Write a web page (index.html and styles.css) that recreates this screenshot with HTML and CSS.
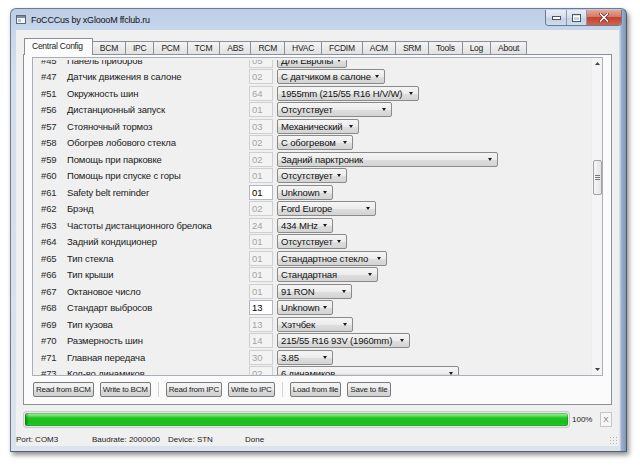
FILE: index.html
```html
<!DOCTYPE html>
<html>
<head>
<meta charset="utf-8">
<link rel="stylesheet" href="styles.css">
</head>
<body>
<div class="window">
  <div class="titlebar">
    <svg class="appicon" width="10" height="9" viewBox="0 0 10 9"><rect x="0.5" y="0.5" width="9" height="8" fill="#f4f6f9" stroke="#5d6675"/><rect x="1" y="1" width="8" height="2" fill="#7d8aa0"/><rect x="2" y="4" width="3" height="3" fill="#b9c3d2"/></svg>
    <span class="title">FoCCCus by xGloooM ffclub.ru</span>
    <div class="winbtns">
      <span class="wb wb-min"><svg width="9" height="4" viewBox="0 0 9 4"><rect x="0.5" y="0.5" width="8" height="3" fill="#fff" stroke="#4a5566"/></svg></span>
      <span class="wb wb-max"><svg width="9" height="8" viewBox="0 0 9 8"><rect x="0.5" y="0.5" width="8" height="7" fill="none" stroke="#4a5566"/><rect x="1.5" y="2.5" width="6" height="4" fill="none" stroke="#fff"/></svg></span>
      <span class="wb wb-close"><svg width="10" height="9" viewBox="0 0 10 9"><path d="M1.5 1 L8.5 8 M8.5 1 L1.5 8" stroke="#6a2020" stroke-width="3" stroke-linecap="square"/><path d="M1.5 1 L8.5 8 M8.5 1 L1.5 8" stroke="#fff" stroke-width="1.6" stroke-linecap="square"/></svg></span>
    </div>
  </div>
  <div class="client">
    <div class="tabs">
      <div class="tab active">Central Config</div>
      <div class="tab">BCM</div>
      <div class="tab">IPC</div>
      <div class="tab">PCM</div>
      <div class="tab">TCM</div>
      <div class="tab">ABS</div>
      <div class="tab">RCM</div>
      <div class="tab">HVAC</div>
      <div class="tab">FCDIM</div>
      <div class="tab">ACM</div>
      <div class="tab">SRM</div>
      <div class="tab">Tools</div>
      <div class="tab">Log</div>
      <div class="tab">About</div>
    </div>
    <div class="pane">
      <div class="scrollarea">
        <div class="viewport">
          <div class="list">
            <div class="row"><span class="num">#45</span><span class="name">Панель приборов</span><span class="val">05</span><span class="combo" style="width:70px"><span class="ctext">Для Европы</span><i class="arrow"></i></span></div>
            <div class="row"><span class="num">#47</span><span class="name">Датчик движения в салоне</span><span class="val">02</span><span class="combo" style="width:108px"><span class="ctext">С датчиком в салоне</span><i class="arrow"></i></span></div>
            <div class="row"><span class="num">#51</span><span class="name">Окружность шин</span><span class="val">64</span><span class="combo" style="width:142px"><span class="ctext">1955mm (215/55 R16 H/V/W)</span><i class="arrow"></i></span></div>
            <div class="row"><span class="num">#56</span><span class="name">Дистанционный запуск</span><span class="val">01</span><span class="combo" style="width:115px"><span class="ctext">Отсутствует</span><i class="arrow"></i></span></div>
            <div class="row"><span class="num">#57</span><span class="name">Стояночный тормоз</span><span class="val">03</span><span class="combo" style="width:82px"><span class="ctext">Механический</span><i class="arrow"></i></span></div>
            <div class="row"><span class="num">#58</span><span class="name">Обогрев лобового стекла</span><span class="val">02</span><span class="combo" style="width:76px"><span class="ctext">С обогревом</span><i class="arrow"></i></span></div>
            <div class="row"><span class="num">#59</span><span class="name">Помощь при парковке</span><span class="val">02</span><span class="combo" style="width:221px"><span class="ctext">Задний парктроник</span><i class="arrow"></i></span></div>
            <div class="row"><span class="num">#60</span><span class="name">Помощь при спуске с горы</span><span class="val">01</span><span class="combo" style="width:70px"><span class="ctext">Отсутствует</span><i class="arrow"></i></span></div>
            <div class="row"><span class="num">#61</span><span class="name">Safety belt reminder</span><span class="val edit">01</span><span class="combo" style="width:56px"><span class="ctext">Unknown</span><i class="arrow"></i></span></div>
            <div class="row"><span class="num">#62</span><span class="name">Брэнд</span><span class="val">02</span><span class="combo" style="width:99px"><span class="ctext">Ford Europe</span><i class="arrow"></i></span></div>
            <div class="row"><span class="num">#63</span><span class="name">Частоты дистанционного брелока</span><span class="val">24</span><span class="combo" style="width:56px"><span class="ctext">434 MHz</span><i class="arrow"></i></span></div>
            <div class="row"><span class="num">#64</span><span class="name">Задний кондиционер</span><span class="val">01</span><span class="combo" style="width:70px"><span class="ctext">Отсутствует</span><i class="arrow"></i></span></div>
            <div class="row"><span class="num">#65</span><span class="name">Тип стекла</span><span class="val">01</span><span class="combo" style="width:110px"><span class="ctext">Стандартное стекло</span><i class="arrow"></i></span></div>
            <div class="row"><span class="num">#66</span><span class="name">Тип крыши</span><span class="val">01</span><span class="combo" style="width:101px"><span class="ctext">Стандартная</span><i class="arrow"></i></span></div>
            <div class="row"><span class="num">#67</span><span class="name">Октановое число</span><span class="val">01</span><span class="combo" style="width:75px"><span class="ctext">91 RON</span><i class="arrow"></i></span></div>
            <div class="row"><span class="num">#68</span><span class="name">Стандарт выбросов</span><span class="val edit">13</span><span class="combo" style="width:56px"><span class="ctext">Unknown</span><i class="arrow"></i></span></div>
            <div class="row"><span class="num">#69</span><span class="name">Тип кузова</span><span class="val">13</span><span class="combo" style="width:76px"><span class="ctext">Хэтчбек</span><i class="arrow"></i></span></div>
            <div class="row"><span class="num">#70</span><span class="name">Размерность шин</span><span class="val">14</span><span class="combo" style="width:133px"><span class="ctext">215/55 R16 93V (1960mm)</span><i class="arrow"></i></span></div>
            <div class="row"><span class="num">#71</span><span class="name">Главная передача</span><span class="val">30</span><span class="combo" style="width:56px"><span class="ctext">3.85</span><i class="arrow"></i></span></div>
            <div class="row"><span class="num">#73</span><span class="name">Кол-во динамиков</span><span class="val">02</span><span class="combo" style="width:182px"><span class="ctext">6 динамиков</span><i class="arrow"></i></span></div>
          </div>
        </div>
        <div class="vscroll">
          <span class="sarrow"><svg width="5" height="3" viewBox="0 0 5 3"><path d="M0 3 L2.5 0 L5 3 Z" fill="#404040"/></svg></span>
          <span class="thumb"><i></i><i></i><i></i></span>
          <span class="sarrow bottom"><svg width="5" height="3" viewBox="0 0 5 3"><path d="M0 0 L2.5 3 L5 0 Z" fill="#404040"/></svg></span>
        </div>
      </div>
      <div class="buttons">
        <span class="btn">Read from BCM</span>
        <span class="btn">Write to BCM</span>
        <span class="sep"></span>
        <span class="btn">Read from IPC</span>
        <span class="btn">Write to IPC</span>
        <span class="sep"></span>
        <span class="btn">Load from file</span>
        <span class="btn">Save to file</span>
      </div>
    </div>
    <div class="progressrow">
      <div class="progress"><div class="fill"></div></div>
      <span class="pct">100%</span>
      <span class="xbtn">X</span>
    </div>
    <div class="statusbar">
      <span class="st st-port">Port: COM3</span>
      <span class="st st-baud">Baudrate: 2000000</span>
      <span class="st st-dev">Device: STN</span>
      <span class="st">Done</span>
      <span class="grip"></span>
    </div>
  </div>
</div>
</body>
</html>
```
FILE: styles.css
```css
html, body {
  margin: 0;
  padding: 0;
  background: #ffffff;
}
body {
  width: 640px;
  height: 469px;
  overflow: hidden;
  font-family: "Liberation Sans", Arial, sans-serif;
  color: #1a1a1a;
}
.window {
  margin: 8px 0 0 10px;
  width: 617px;
  height: 444px;
  box-sizing: border-box;
  border: 1px solid #6c7b90;
  border-right-color: #4d5a6c;
  border-bottom-color: #55606f;
  border-radius: 6px 6px 0 0;
  background:
    linear-gradient(to right, rgba(255, 255, 255, 0) 0, rgba(255, 255, 255, 0) calc(100% - 6px), #9fb3d0 calc(100% - 5px), #7f95b8 100%),
    linear-gradient(to bottom, #bccde6 0, #c6d6eb 21px, #d3deec 60px, #dbe3ee 100%);
  box-shadow: 2px 3px 5px rgba(0, 0, 0, 0.45);
  display: flex;
  flex-direction: column;
}
.titlebar {
  height: 21px;
  display: flex;
  align-items: center;
  padding-left: 5px;
  position: relative;
}
.appicon {
  display: block;
  margin-right: 5px;
}
.title {
  font-size: 9px;
  letter-spacing: -0.2px;
  color: #101010;
}
.winbtns {
  margin-left: auto;
  align-self: flex-start;
  margin-top: 1px;
  margin-right: 4px;
  display: flex;
  border: 1px solid #6a7a92;
  border-top: none;
  border-radius: 0 0 4px 4px;
  overflow: hidden;
}
.wb {
  height: 15px;
  display: flex;
  align-items: center;
  justify-content: center;
  background: linear-gradient(to bottom, #e8eef6 0, #d3deeb 50%, #c2d0e2 51%, #cfdcec 100%);
}
.wb-min { width: 20px; border-right: 1px solid #8b9ab0; }
.wb-max { width: 19px; border-right: 1px solid #8b9ab0; }
.wb-close {
  width: 34px;
  background: linear-gradient(to bottom, #e8a493 0, #d47a68 45%, #c2432e 50%, #d1624c 100%);
}
.client {
  flex: 1;
  margin: 0 7px 5px 5px;
  background: #f0f0f0;
  padding: 8px 7px 0 7px;
  display: flex;
  flex-direction: column;
}
.tabs {
  display: flex;
  height: 16px;
  padding-left: 1px;
}
.tab {
  margin-top: 3px;
  box-sizing: border-box;
  height: 13px;
  border-top: 1px solid #8c8f97;
  border-right: 1px solid #8c8f97;
  background: linear-gradient(to bottom, #f3f3f3, #e1e1e1);
  font-size: 8.5px;
  letter-spacing: -0.25px;
  line-height: 12px;
  padding: 0 7px;
  color: #222;
}
.tab.active {
  height: 17px;
  margin-top: 0;
  margin-bottom: -1px;
  border: 1px solid #8c8f97;
  border-bottom: none;
  background: #fcfcfc;
  padding: 0 9px 0 7px;
  line-height: 15px;
  position: relative;
}
.pane {
  height: 351px;
  box-sizing: border-box;
  border: 1px solid #8c8f97;
  background: #fbfbfb;
  padding: 2px 8px 0 8px;
  display: flex;
  flex-direction: column;
}
.scrollarea {
  height: 319px;
  box-sizing: border-box;
  border: 1px solid #a9afb8;
  background: #f0f0f0;
  display: flex;
}
.viewport {
  flex: 1;
  overflow: hidden;
  margin-top: 2px;
}
.list {
  margin-top: -8px;
}
.row {
  height: 16.5px;
  display: flex;
  align-items: center;
  padding-left: 8px;
  font-size: 9.5px;
  letter-spacing: -0.15px;
}
.num {
  width: 26px;
  flex: none;
  color: #2a2a2a;
}
.name {
  width: 182px;
  flex: none;
  white-space: nowrap;
}
.val {
  width: 24px;
  height: 15px;
  flex: none;
  box-sizing: border-box;
  border: 1px solid #cfcfcf;
  background: #f3f3f3;
  color: #a4a4a4;
  padding-left: 2px;
  line-height: 13px;
  margin-right: 4px;
}
.val.edit {
  background: #ffffff;
  color: #000;
  border-color: #b4b7bd;
}
.combo {
  height: 15px;
  flex: none;
  box-sizing: border-box;
  border: 1px solid #8a8a8a;
  border-radius: 2px;
  background: linear-gradient(to bottom, #f5f5f5 0, #ececec 50%, #dedede 51%, #d4d4d4 100%);
  display: flex;
  align-items: center;
  padding-left: 3px;
  color: #111;
  white-space: nowrap;
  overflow: hidden;
}
.ctext {
  flex: 1;
  overflow: hidden;
}
.arrow {
  width: 0;
  height: 0;
  border-left: 2.5px solid transparent;
  border-right: 2.5px solid transparent;
  border-top: 3px solid #1a1a1a;
  margin: 0 5px 0 3px;
  flex: none;
}
.vscroll {
  width: 10px;
  flex: none;
  display: flex;
  flex-direction: column;
  align-items: center;
  background: #f4f4f4;
  border-left: 1px solid #ececec;
}
.sarrow {
  height: 11px;
  width: 10px;
  display: flex;
  align-items: center;
  justify-content: center;
}
.sarrow.bottom {
  margin-top: auto;
}
.thumb {
  margin-top: 91px;
  width: 9px;
  height: 35px;
  box-sizing: border-box;
  border: 1px solid #a2a2a2;
  border-radius: 2px;
  background: linear-gradient(to right, #f6f6f6, #e4e4e4);
  display: flex;
  flex-direction: column;
  align-items: center;
  justify-content: center;
  gap: 1px;
}
.thumb i {
  width: 5px;
  height: 1px;
  background: #7a7a7a;
}
.buttons {
  display: flex;
  align-items: center;
  gap: 6px;
  margin-top: 6px;
  padding-left: 1px;
  height: 15px;
}
.btn {
  height: 15px;
  box-sizing: border-box;
  border: 1px solid #7a7a7a;
  border-radius: 2px;
  background: linear-gradient(to bottom, #f4f4f4 0, #ebebeb 50%, #dddddd 51%, #d0d0d0 100%);
  font-size: 8px;
  letter-spacing: -0.2px;
  line-height: 13px;
  padding: 0 2px;
  color: #222;
  white-space: nowrap;
}
.sep {
  width: 1px;
  height: 15px;
  background: #d6d6d6;
  margin: 0 1px;
}
.progressrow {
  margin-top: 6px;
  height: 17px;
  display: flex;
  align-items: center;
}
.progress {
  width: 547px;
  height: 17px;
  box-sizing: border-box;
  border: 1px solid #c8c8c8;
  border-radius: 3px;
  background: #e9e9e9;
  padding: 1px;
}
.fill {
  height: 100%;
  border-radius: 2px;
  background:
    linear-gradient(to right, rgba(0, 90, 0, 0.55) 0, rgba(0, 90, 0, 0) 4px),
    linear-gradient(to bottom, #b4f3b4 0, #6fe06f 20%, #20c520 38%, #1cbc1c 75%, #2ecb2e 100%);
  box-shadow: inset 0 0 0 1px rgba(0, 120, 0, 0.35);
}
.pct {
  font-size: 8px;
  margin-left: 2px;
  color: #222;
}
.xbtn {
  margin-left: auto;
  width: 12px;
  height: 15px;
  box-sizing: border-box;
  border: 1px solid #c6c6c6;
  background: #f6f6f6;
  font-size: 8px;
  line-height: 13px;
  text-align: center;
  color: #777;
}
.statusbar {
  margin: auto -7px 0 -7px;
  height: 14px;
  display: flex;
  align-items: center;
  font-size: 8px;
  color: #222;
  position: relative;
}
.st-port { width: 76px; }
.st-baud { width: 76px; }
.st-dev { width: 77px; }
.grip {
  position: absolute;
  right: 2px;
  bottom: 2px;
  width: 8px;
  height: 8px;
  background: radial-gradient(circle, #b4b4b4 0.8px, transparent 1px) 0 0 / 3px 3px;
}
```
